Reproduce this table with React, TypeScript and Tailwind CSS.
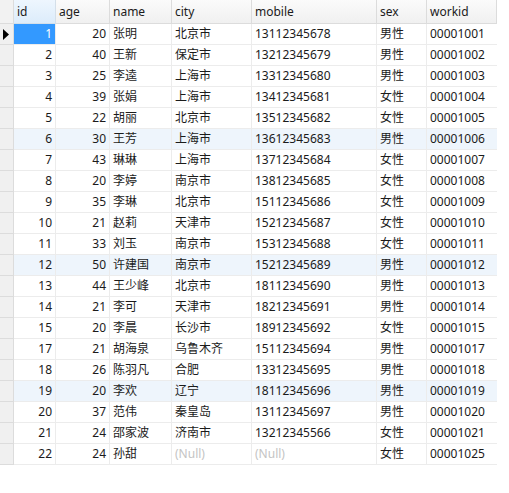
import React from "react";

const rows: [number, number, string, string, string, string, string][] = [
  [1, 20, "张明", "北京市", "13112345678", "男性", "00001001"],
  [2, 40, "王新", "保定市", "13212345679", "男性", "00001002"],
  [3, 25, "李逵", "上海市", "13312345680", "男性", "00001003"],
  [4, 39, "张娟", "上海市", "13412345681", "女性", "00001004"],
  [5, 22, "胡丽", "北京市", "13512345682", "女性", "00001005"],
  [6, 30, "王芳", "上海市", "13612345683", "男性", "00001006"],
  [7, 43, "琳琳", "上海市", "13712345684", "女性", "00001007"],
  [8, 20, "李婷", "南京市", "13812345685", "女性", "00001008"],
  [9, 35, "李琳", "北京市", "15112345686", "女性", "00001009"],
  [10, 21, "赵莉", "天津市", "15212345687", "女性", "00001010"],
  [11, 33, "刘玉", "南京市", "15312345688", "女性", "00001011"],
  [12, 50, "许建国", "南京市", "15212345689", "男性", "00001012"],
  [13, 44, "王少峰", "北京市", "18112345690", "男性", "00001013"],
  [14, 21, "李可", "天津市", "18212345691", "男性", "00001014"],
  [15, 20, "李晨", "长沙市", "18912345692", "女性", "00001015"],
  [17, 21, "胡海泉", "乌鲁木齐", "15112345694", "男性", "00001017"],
  [18, 26, "陈羽凡", "合肥", "13312345695", "男性", "00001018"],
  [19, 20, "李欢", "辽宁", "18112345696", "男性", "00001019"],
  [20, 37, "范伟", "秦皇岛", "13112345697", "男性", "00001020"],
  [21, 24, "邵家波", "济南市", "13212345566", "女性", "00001021"],
  [22, 24, "孙甜", "", "", "女性", "00001025"],
];

const headers = ["id", "age", "name", "city", "mobile", "sex", "workid"];
const blueRows = new Set([6, 12, 19]);

export default function App() {
  return (
    <div
      className="w-[509px] h-[493px] bg-white overflow-hidden text-[12px] text-[#1b1b1b]"
      style={{ fontFamily: '"Noto Sans", "Noto Sans CJK SC", sans-serif' }}
    >
      <div className="w-[497px] border-r border-[#dcdcdc] grid grid-cols-[14px_42px_54px_62px_80px_125px_50px_70px]">
        <div className="h-[24px] bg-[#f2f2f2] border-r border-b border-[#dcdcdc]" />
        {headers.map((h, hi) => (
          <div
            key={h}
            className={
              hi === 0
                ? "h-[24px] bg-gradient-to-b from-[#eef6fe] to-[#dcecfb] border-r border-b border-[#d4dfe9] pl-[3px] flex items-center leading-none"
                : "h-[24px] bg-gradient-to-b from-[#fbfbfb] to-[#f0f0f0] border-r border-b border-[#dcdcdc] pl-[3px] flex items-center leading-none last:border-r-0"
            }
          >
            {h}
          </div>
        ))}
        {rows.map((r, i) => {
          const bg = blueRows.has(r[0]) ? "bg-[#eef5fc]" : "bg-white";
          const cell = `h-[21px] border-r border-b border-[#ececec] flex items-center leading-none ${bg}`;
          return (
            <React.Fragment key={i}>
              <div className="h-[21px] bg-[#f0f0f0] border-r border-b border-[#dcdcdc] flex items-center justify-start pl-[3px]">
                {i === 0 && (
                  <svg width="7" height="11" viewBox="0 0 7 11">
                    <path d="M0 0 L6 5.5 L0 11 Z" fill="#000" />
                  </svg>
                )}
              </div>
              <div
                className={
                  i === 0
                    ? "h-[21px] border-r border-b border-[#ececec] flex items-center justify-end pr-[3px] leading-none bg-[#3399ff] text-white"
                    : `${cell} justify-end pr-[3px]`
                }
              >
                {r[0]}
              </div>
              <div className={`${cell} justify-end pr-[3px]`}>{r[1]}</div>
              <div className={`${cell} pl-[3px]`}>{r[2]}</div>
              <div className={`${cell} pl-[3px]`}>
                {r[3] ? r[3] : <span className="text-[#c4c4c4]">(Null)</span>}
              </div>
              <div className={`${cell} pl-[3px]`}>
                {r[4] ? r[4] : <span className="text-[#c4c4c4]">(Null)</span>}
              </div>
              <div className={`${cell} pl-[3px]`}>{r[5]}</div>
              <div className={`${cell} pl-[3px] border-r-0`}>{r[6]}</div>
            </React.Fragment>
          );
        })}
      </div>
    </div>
  );
}
